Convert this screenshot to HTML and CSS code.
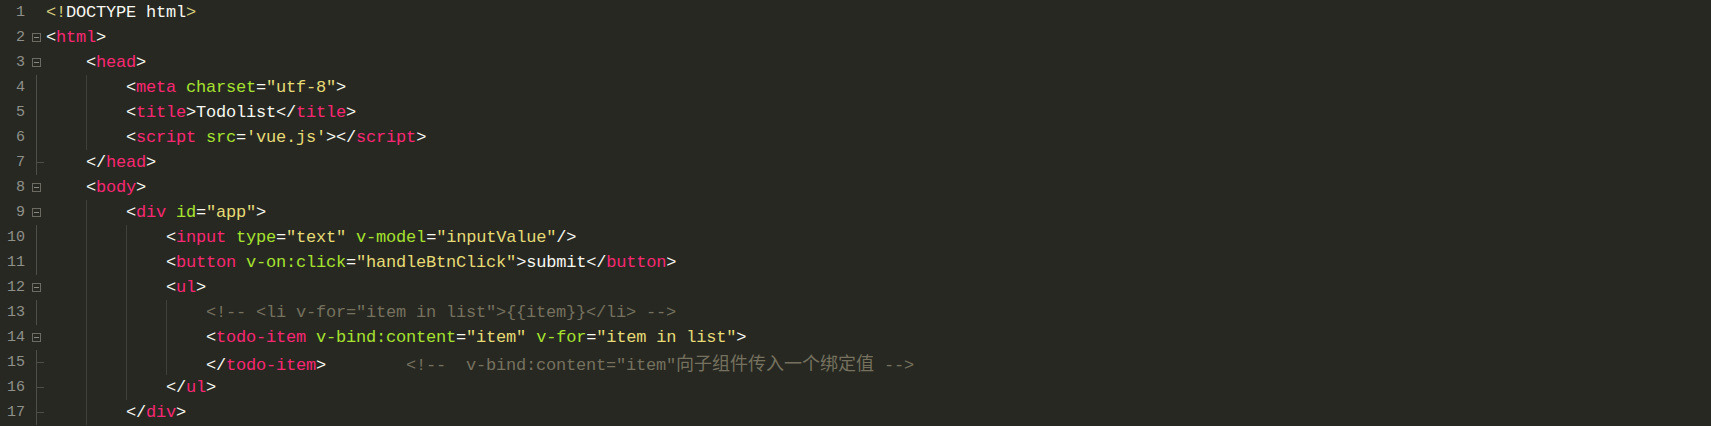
FILE: index.html
```html
<!DOCTYPE html>
<html>
<head>
<meta charset="utf-8">
<title>Todolist</title>
<link rel="stylesheet" href="styles.css">
</head>
<body>
<div class="editor">
  <div class="row"><span class="ln">1</span><span class="fold"></span><span class="code"><span class="dt">&lt;!</span>DOCTYPE html<span class="dt">&gt;</span></span></div>
  <div class="row"><span class="ln">2</span><span class="fold box"></span><span class="code">&lt;<span class="t">html</span>&gt;</span></div>
  <div class="row"><span class="ln">3</span><span class="fold box"></span><span class="code"><span class="ind"></span>&lt;<span class="t">head</span>&gt;</span></div>
  <div class="row"><span class="ln">4</span><span class="fold vl"></span><span class="code"><span class="ind"></span><span class="ind g"></span>&lt;<span class="t">meta</span> <span class="a">charset</span>=<span class="s">"utf-8"</span>&gt;</span></div>
  <div class="row"><span class="ln">5</span><span class="fold vl"></span><span class="code"><span class="ind"></span><span class="ind g"></span>&lt;<span class="t">title</span>&gt;Todolist&lt;/<span class="t">title</span>&gt;</span></div>
  <div class="row"><span class="ln">6</span><span class="fold vl"></span><span class="code"><span class="ind"></span><span class="ind g"></span>&lt;<span class="t">script</span> <span class="a">src</span>=<span class="s">'vue.js'</span>&gt;&lt;/<span class="t">script</span>&gt;</span></div>
  <div class="row"><span class="ln">7</span><span class="fold vl tick"></span><span class="code"><span class="ind"></span>&lt;/<span class="t">head</span>&gt;</span></div>
  <div class="row"><span class="ln">8</span><span class="fold box"></span><span class="code"><span class="ind"></span>&lt;<span class="t">body</span>&gt;</span></div>
  <div class="row"><span class="ln">9</span><span class="fold box"></span><span class="code"><span class="ind"></span><span class="ind g"></span>&lt;<span class="t">div</span> <span class="a">id</span>=<span class="s">"app"</span>&gt;</span></div>
  <div class="row"><span class="ln">10</span><span class="fold vl"></span><span class="code"><span class="ind"></span><span class="ind g"></span><span class="ind g"></span>&lt;<span class="t">input</span> <span class="a">type</span>=<span class="s">"text"</span> <span class="a">v-model</span>=<span class="s">"inputValue"</span>/&gt;</span></div>
  <div class="row"><span class="ln">11</span><span class="fold vl"></span><span class="code"><span class="ind"></span><span class="ind g"></span><span class="ind g"></span>&lt;<span class="t">button</span> <span class="a">v-on:click</span>=<span class="s">"handleBtnClick"</span>&gt;submit&lt;/<span class="t">button</span>&gt;</span></div>
  <div class="row"><span class="ln">12</span><span class="fold box"></span><span class="code"><span class="ind"></span><span class="ind g"></span><span class="ind g"></span>&lt;<span class="t">ul</span>&gt;</span></div>
  <div class="row"><span class="ln">13</span><span class="fold vl"></span><span class="code"><span class="ind"></span><span class="ind g"></span><span class="ind g"></span><span class="ind g"></span><span class="c">&lt;!-- &lt;li v-for="item in list"&gt;{{item}}&lt;/li&gt; --&gt;</span></span></div>
  <div class="row"><span class="ln">14</span><span class="fold box"></span><span class="code"><span class="ind"></span><span class="ind g"></span><span class="ind g"></span><span class="ind g"></span>&lt;<span class="t">todo-item</span> <span class="a">v-bind:content</span>=<span class="s">"item"</span> <span class="a">v-for</span>=<span class="s">"item in list"</span>&gt;</span></div>
  <div class="row"><span class="ln">15</span><span class="fold vl tick"></span><span class="code"><span class="ind"></span><span class="ind g"></span><span class="ind g"></span><span class="ind g"></span>&lt;/<span class="t">todo-item</span>&gt;        <span class="c">&lt;!--  v-bind:content="item"<span class="cjk">向子组件传入一个绑定值</span> --&gt;</span></span></div>
  <div class="row"><span class="ln">16</span><span class="fold vl tick"></span><span class="code"><span class="ind"></span><span class="ind g"></span><span class="ind g"></span>&lt;/<span class="t">ul</span>&gt;</span></div>
  <div class="row"><span class="ln">17</span><span class="fold vl tick"></span><span class="code"><span class="ind"></span><span class="ind g"></span>&lt;/<span class="t">div</span>&gt;</span></div>
</div>
</body>
</html>
```
FILE: styles.css
```css
html, body {
  margin: 0;
  padding: 0;
  background: #272822;
  height: 100%;
  overflow: hidden;
}

.editor {
  display: flex;
  flex-direction: column;
  background: #272822;
  color: #f8f8f2;
  font-family: "Liberation Mono", "DejaVu Sans Mono", monospace;
}

.row {
  display: flex;
  height: 25px;
  line-height: 25px;
  align-items: stretch;
}

.ln {
  width: 25px;
  flex: none;
  text-align: right;
  font-size: 15px;
  color: #8f908a;
}

.fold {
  width: 21px;
  flex: none;
  position: relative;
}

.fold.box::before {
  content: "";
  position: absolute;
  left: 7px;
  top: 8px;
  width: 7px;
  height: 7px;
  border: 1px solid #6b6b64;
}

.fold.box::after {
  content: "";
  position: absolute;
  left: 9px;
  top: 12px;
  width: 5px;
  height: 1px;
  background: #8a8a83;
}

.fold.vl::before {
  content: "";
  position: absolute;
  left: 11px;
  top: 0;
  bottom: 0;
  width: 1px;
  background: #4d4e47;
}

.fold.tick::after {
  content: "";
  position: absolute;
  left: 11px;
  top: 12px;
  width: 8px;
  height: 1px;
  background: #4d4e47;
}

.code {
  white-space: pre;
  font-size: 17px;
  letter-spacing: -0.2px;
}

.ind {
  display: inline-block;
  width: 40px;
  height: 25px;
  vertical-align: top;
  box-sizing: border-box;
}

.ind.g {
  border-left: 1px solid #3f403a;
}

.t { color: #f92672; }
.a { color: #a6e22e; }
.s { color: #e6db74; }
.c { color: #75715e; }
.dt { color: #d6cc7c; }

.cjk {
  font-family: "Noto Sans CJK SC", sans-serif;
  font-size: 18px;
  letter-spacing: 0;
}
```
